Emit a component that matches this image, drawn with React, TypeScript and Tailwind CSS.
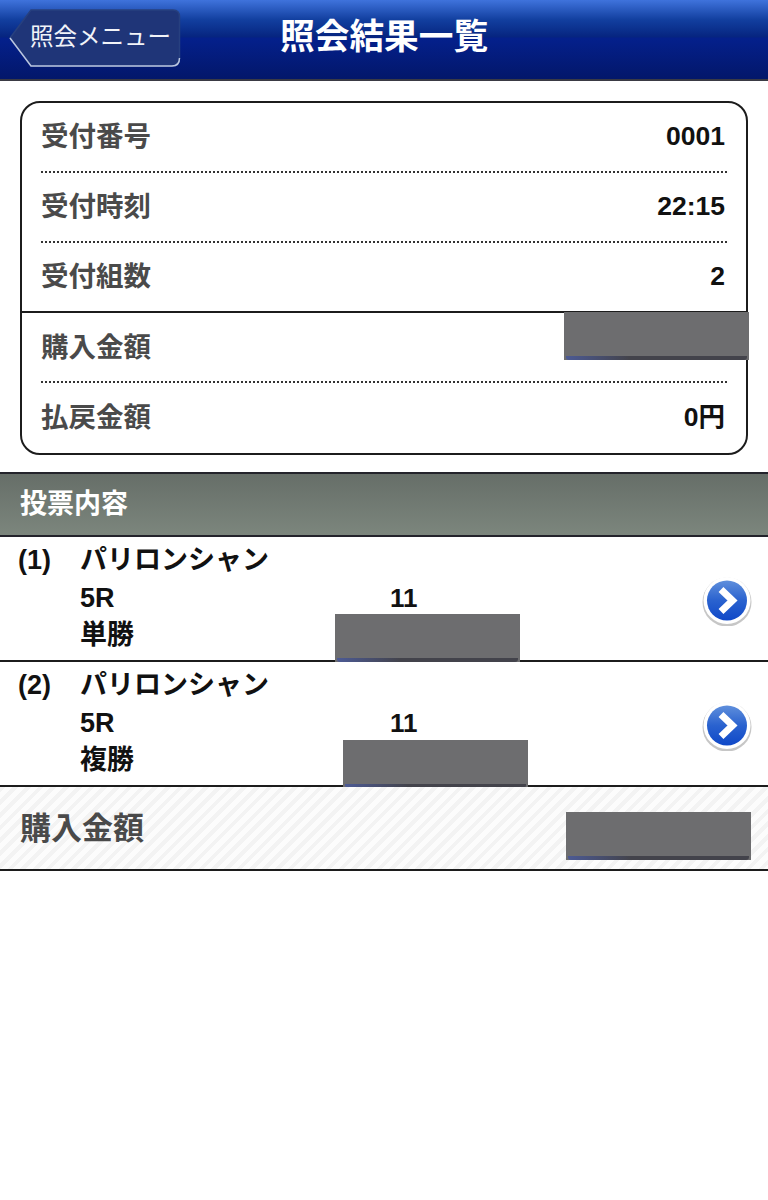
const font = "font-['Liberation_Sans','Noto_Sans_CJK_JP',sans-serif]";

const summary = [
  { label: "受付番号", value: "0001", rowClass: "h-[68px]" },
  { label: "受付時刻", value: "22:15", rowClass: "h-[68px]" },
  { label: "受付組数", value: "2", rowClass: "h-[68px]" },
  { label: "購入金額", value: "", solid: true, rowClass: "h-[68px] pt-[2px]" },
  { label: "払戻金額", value: "0円", rowClass: "h-[70px]" },
];

const bets = [
  { no: "(1)", course: "パリロンシャン", race: "5R", type: "単勝", horse: "11", maskClass: "left-[335px] top-[77px]" },
  { no: "(2)", course: "パリロンシャン", race: "5R", type: "複勝", horse: "11", maskClass: "left-[343px] top-[78px]" },
];

function Mask({ className }: { className: string }) {
  return (
    <div className={`absolute flex h-[48px] w-[185px] flex-col justify-end bg-[#6d6d6f] ${className}`}>
      <div className="mx-[2px] h-[4px] rounded-b-[3px] bg-[linear-gradient(90deg,#4c5a94,#43434b_35%,#43434b)]" />
    </div>
  );
}

function ArrowIcon() {
  return (
    <svg width="50" height="50" viewBox="0 0 50 50">
      <defs>
        <linearGradient id="arrow-fill" x1="0" y1="0" x2="0" y2="1">
          <stop offset="0" stopColor="#5f8fdc" />
          <stop offset="0.5" stopColor="#2a62cf" />
          <stop offset="1" stopColor="#0f48c8" />
        </linearGradient>
      </defs>
      <circle cx="25" cy="26" r="24.500" fill="#8d8d8d" opacity="0.5" />
      <circle cx="25" cy="24.500" r="23.500" fill="#ffffff" />
      <circle cx="25" cy="24.500" r="20" fill="url(#arrow-fill)" />
      <path d="M19 13.500 L30.500 24.500 L19 35.500" fill="none" stroke="#ffffff" strokeWidth="7" strokeLinejoin="miter" />
    </svg>
  );
}

function BackButton() {
  return (
    <button className="relative ml-[9px] mt-[9px] flex h-[58px] w-[172px] items-center pl-[21px] text-[23.5px] font-normal text-[#f1f3f8]">
      <svg className="absolute left-0 top-0" width="172" height="58" viewBox="0 0 172 58">
        <path
          d="M22 1 H164 Q170.500 1 170.500 8 V49 Q170.500 57 163 57 H22 L1 29 Z"
          fill="#1f3578"
          stroke="#27407f"
          strokeWidth="1.500"
        />
        <path d="M1 29 L22 57 H163 Q170.500 57 170.500 49" fill="none" stroke="#b9c5e0" strokeWidth="1.500" />
      </svg>
      <span className="relative">照会メニュー</span>
    </button>
  );
}

export default function App() {
  return (
    <div className={`min-h-[1200px] w-[768px] bg-white ${font}`}>
      <header className="flex h-[81px] border-b-2 border-b-[#3a3a44] bg-[linear-gradient(#3f73dc_0%,#123f9f_25%,#06247f_47%,#04208c_48%,#03176a_100%)]">
        <BackButton />
        <h1 className="ml-[99px] mt-[15px] text-[34.7px] font-bold leading-[44px] text-white">照会結果一覧</h1>
      </header>

      <div className="px-[20px] pb-[17px] pt-[20px]">
        <div className="relative rounded-[20px] border-2 border-[#1c1c1c]">
          {summary.map((row, i) => (
            <div key={row.label}>
              {i > 0 && (
                row.solid ? (
                  <div className="border-t-2 border-[#1c1c1c]" />
                ) : (
                  <div className="mx-[19px] border-t-2 border-dotted border-[#333333]" />
                )
              )}
              <div className={`flex items-center justify-between pl-[19px] pr-[21px] ${row.rowClass}`}>
                <span className="text-[27.5px] font-bold text-[#4a4a4a]">{row.label}</span>
                <span className="text-[26.5px] font-bold text-[#111111]">{row.value}</span>
              </div>
            </div>
          ))}
          <Mask className="right-[-3px] top-[209px]" />
        </div>
      </div>

      <div className="h-[65px] border-y-2 border-y-[#23232b] bg-[linear-gradient(#666e68,#7c867d)] pl-[20px] text-[27px] font-bold leading-[61px] text-white">
        投票内容
      </div>

      {bets.map((bet) => (
        <div key={bet.no} className="relative flex h-[125px] border-b-2 border-b-[#1c1c1c] pl-[18px] pt-[5px] text-[#111111]">
          <div className="w-[62px] text-[27px] font-bold leading-[36px]">{bet.no}</div>
          <div className="flex flex-col text-[27px] font-bold leading-[37.500px]">
            <span>{bet.course}</span>
            <span>{bet.race}</span>
            <span>{bet.type}</span>
          </div>
          <div className="ml-[121px] mt-[38px] text-[26px] font-bold leading-[37px]">{bet.horse}</div>
          <div className="absolute right-[16px] top-[39px]">
            <ArrowIcon />
          </div>
          <Mask className={bet.maskClass} />
        </div>
      ))}

      <div className="relative flex h-[84px] items-center border-b-2 border-b-[#1c1c1c] bg-[repeating-linear-gradient(135deg,#f3f3f3_0,#f3f3f3_4px,#fcfcfc_4px,#fcfcfc_9px)] pb-[1px] pl-[20px]">
        <span className="mt-[3px] text-[31px] font-bold text-[#4a4a4a]">購入金額</span>
        <Mask className="left-[566px] top-[25px]" />
      </div>
    </div>
  );
}
